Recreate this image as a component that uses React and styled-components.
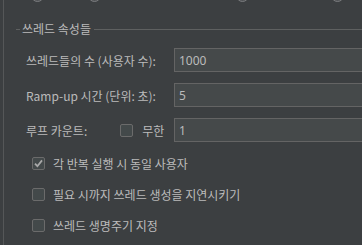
import React from "react";
import styled, { createGlobalStyle } from "styled-components";

const GlobalStyle = createGlobalStyle`
  html, body {
    margin: 0;
    padding: 0;
    background: #3c3f41;
  }
  body {
    font-family: "Noto Sans CJK KR", "Noto Sans", sans-serif;
    font-size: 12px;
    color: #bbbbbb;
  }
`;

const App = () => {
    return (
        <>
            <GlobalStyle/>
            <Page>
                <Panel>
                    <RadioStrip>
                        <Radio offset={27}/>
                        <Radio offset={44}/>
                        <Radio offset={135}/>
                        <Radio offset={82}/>
                    </RadioStrip>
                    <Group>
                        <GroupTitle>
                            <TitleLead/>
                            <TitleText>쓰레드 속성들</TitleText>
                            <TitleLine/>
                        </GroupTitle>
                        <Rows>
                            <FieldRow>
                                <Label>쓰레드들의 수 (사용자 수):</Label>
                                <TextField defaultValue="1000"/>
                            </FieldRow>
                            <FieldRow>
                                <Label>Ramp-up 시간 (단위: 초):</Label>
                                <TextField defaultValue="5"/>
                            </FieldRow>
                            <FieldRow>
                                <Label>
                                    <span>루프 카운트:</span>
                                    <Inline>
                                        <Box/>
                                        <span>무한</span>
                                    </Inline>
                                </Label>
                                <TextField defaultValue="1"/>
                            </FieldRow>
                        </Rows>
                        <Checks>
                            <CheckRow>
                                <Box>
                                    <svg width="11" height="11" viewBox="0 0 11 11">
                                        <path d="M2 5.6 L4.4 8.2 L9 2.4" fill="none" stroke="#a9a9a9" strokeWidth="1.8"/>
                                    </svg>
                                </Box>
                                <span>각 반복 실행 시 동일 사용자</span>
                            </CheckRow>
                            <CheckRow>
                                <Box/>
                                <span>필요 시까지 쓰레드 생성을 지연시키기</span>
                            </CheckRow>
                            <CheckRow>
                                <Box/>
                                <span>쓰레드 생명주기 지정</span>
                            </CheckRow>
                        </Checks>
                    </Group>
                </Panel>
            </Page>
        </>
    )
}

const Page = styled.div`
  width: 362px;
  height: 245px;
  overflow: hidden;
  padding-left: 3px;
  box-sizing: border-box;
`

const Panel = styled.div`
  height: 100%;
  border-left: 1px solid #555758;
`

const RadioStrip = styled.div`
  display: flex;
  height: 2px;
  overflow: hidden;
  align-items: flex-end;
`

const Radio = styled.div`
  flex: none;
  width: 13px;
  height: 13px;
  margin-top: -11px;
  margin-left: ${p => p.offset}px;
  border-radius: 50%;
  border: 1px solid #7a7c7e;
  background: #505355;
  box-sizing: border-box;
`

const Group = styled.div`
  padding: 20px 0 0 12px;
`

const GroupTitle = styled.div`
  display: flex;
  align-items: center;
  height: 14px;
`

const TitleLead = styled.div`
  width: 4px;
  height: 1px;
  background: #5e6060;
`

const TitleText = styled.div`
  padding: 0 3px 0 2px;
  color: #bbbbbb;
  font-size: 12px;
  line-height: 14px;
`

const TitleLine = styled.div`
  flex: 1;
  height: 1px;
  background: #5e6060;
`

const Rows = styled.div`
  display: flex;
  flex-direction: column;
  gap: 11px;
  margin-top: 12px;
  padding-left: 10px;
`

const FieldRow = styled.div`
  display: flex;
  align-items: center;
  height: 24px;
`

const Label = styled.div`
  width: 148px;
  flex: none;
  display: flex;
  align-items: center;
  gap: 33px;
  white-space: nowrap;
`

const Inline = styled.div`
  display: flex;
  align-items: center;
  gap: 9px;
`

const TextField = styled.input`
  flex: 1;
  min-width: 0;
  height: 24px;
  box-sizing: border-box;
  margin: 0;
  margin-right: -20px;
  padding: 0 4px;
  background: #45494a;
  border: 1px solid #646464;
  color: #bbbbbb;
  font-family: "Noto Sans", sans-serif;
  font-size: 12px;
  outline: none;
`

const Checks = styled.div`
  display: flex;
  flex-direction: column;
  gap: 17px;
  margin-top: 14px;
  padding-left: 16px;
`

const CheckRow = styled.div`
  display: flex;
  align-items: center;
  gap: 8px;
  height: 14px;
  white-space: nowrap;
`

const Box = styled.div`
  width: 13px;
  height: 13px;
  box-sizing: border-box;
  border: 1px solid #6b6b6b;
  border-radius: 2px;
  background: #43494a;
  display: flex;
  align-items: center;
  justify-content: center;
  flex: none;
`

export default App
